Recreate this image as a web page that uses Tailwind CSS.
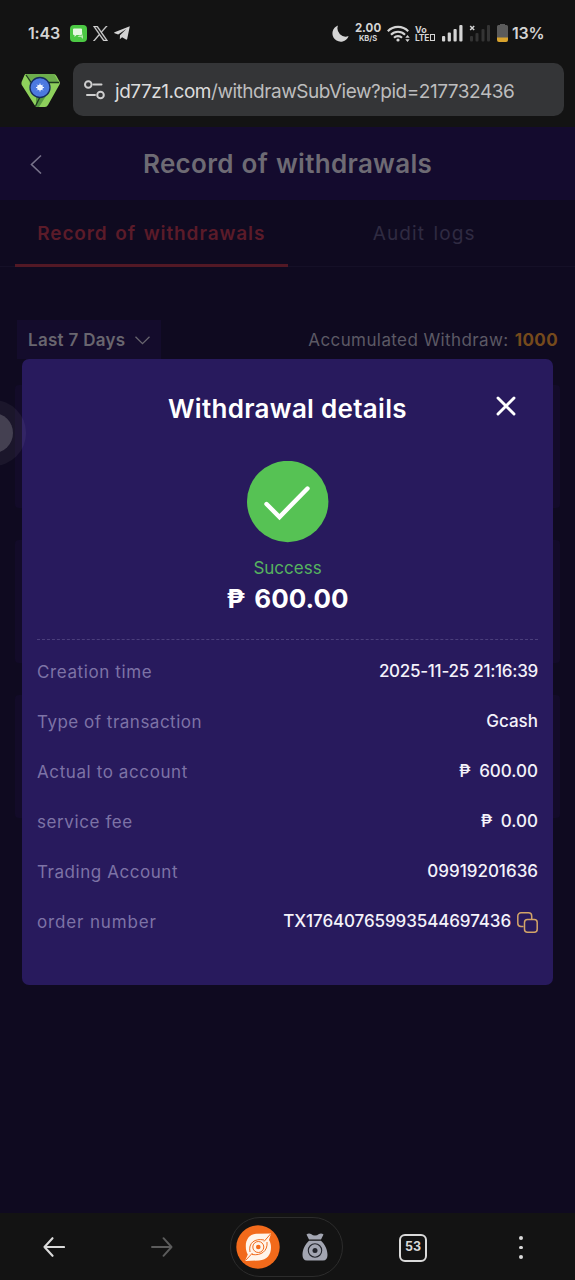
<!DOCTYPE html>
<html lang="en">
<head>
<meta charset="utf-8">
<title>Record of withdrawals</title>
<script src="https://cdn.jsdelivr.net/npm/@tailwindcss/browser@4"></script>
</head>
<body class="flex h-[1280px] w-[575px] flex-col overflow-hidden bg-[#131313] font-['Inter','Noto_Sans',sans-serif] text-white">

<!-- Status bar -->
<div class="flex h-[63px] shrink-0 items-center pt-[3px] pl-[28px] text-[#d4d4d4]">
  <span class="w-[32px] text-[16px] leading-none font-semibold tracking-[-0.2px] whitespace-nowrap">1:43</span>
  <svg class="ml-[10px] h-[17px] w-[17px]" viewBox="0 0 17 17"><rect width="17" height="17" rx="4" fill="#4cc944"/><path d="M4 3.500h7a1 1 0 0 1 1 1v4.500a1 1 0 0 1-1 1H6.500L4.500 12V10H4a1 1 0 0 1-1-1V4.500a1 1 0 0 1 1-1z" fill="#e6f8e2"/><path d="M13 6.500v7.500l-2-2H7.500l1.500-1.500h3.500z" fill="#b9eab2"/></svg>
  <svg class="ml-[6px] h-[15px] w-[15px]" viewBox="0 0 24 24" fill="#d4d4d4" stroke="#d4d4d4" stroke-width=".6"><path d="M14.234 10.162 22.977 0h-2.072l-7.591 8.824L7.251 0H.258l9.168 13.343L.258 24H2.330l8.016-9.318L16.749 24h6.993zm-2.837 3.299-.929-1.329L3.076 1.560h3.182l5.965 8.532.929 1.329 7.754 11.090h-3.182z"/></svg>
  <svg class="ml-[6px] h-[14px] w-[16px]" viewBox="0 0 16 14" fill="#d4d4d4"><path d="M15.800.300.500 6.300c-.5.300-.4.800.1 1l3.600 1.200L12.300 3 6 9.200l-.2 4 2.300-1.900 3.900 2.300c.6.300 1 .1 1.200-.6L15.800.300z"/></svg>
  <svg class="ml-[202px] h-[17px] w-[17px]" viewBox="0 0 17 17" fill="#d4d4d4"><path d="M6 .500A8.300 8.300 0 1 0 16.600 11 8.200 8.200 0 0 1 6 .500z"/></svg>
  <div class="ml-[6px] flex w-[26px] flex-col items-center gap-[2px] leading-none font-bold">
    <span class="text-[11.500px] leading-[9px]">2.00</span><span class="text-[7.500px] leading-[7px]">KB/S</span>
  </div>
  <svg class="ml-[6px] h-[17px] w-[23px]" viewBox="0 0 23 17" fill="none" stroke="#d4d4d4" stroke-width="2.100"><path d="M.800 6.200a14.200 14.200 0 0 1 20.400 0M4 9.700a9.800 9.800 0 0 1 14 0M7 12.800a5.600 5.600 0 0 1 8 0"/><circle cx="11" cy="15" r="1.600" fill="#d4d4d4" stroke="none"/><path d="M18.300 12.800 20.500 10l2.200 2.800zM18.300 14.200l2.200 2.800 2.200-2.800z" fill="#d4d4d4" stroke="none"/></svg>
  <div class="ml-[5px] flex w-[21px] flex-col leading-none font-bold">
    <span class="text-[9px] leading-[9px]">Vo</span><span class="flex items-center text-[8.500px] leading-[8px] tracking-[-0.2px]">LTE<i class="ml-px h-[7px] w-[5px] border-[1.500px] border-[#d4d4d4]"></i></span>
  </div>
  <svg class="ml-[6px] h-[18px] w-[21px]" viewBox="0 0 21 18" fill="#d4d4d4"><rect y="12" width="3.200" height="5.500" rx="1"/><rect x="5.700" y="8.500" width="3.200" height="9" rx="1"/><rect x="11.500" y="5" width="3.200" height="12.500" rx="1"/><rect x="17.300" y="1" width="3.200" height="16.500" rx="1"/></svg>
  <svg class="ml-[6px] h-[18px] w-[22px]" viewBox="0 0 22 18" fill="#343434"><path d="m1.200 2 4 4m0-4-4 4" stroke="#d4d4d4" stroke-width="1.500"/><rect x="1" y="12" width="3" height="5.500" rx="1"/><rect x="6.500" y="9" width="3" height="8.500" rx="1"/><rect x="12.500" y="5" width="3" height="12.500" rx="1"/><rect x="18" y="1" width="3" height="16.500" rx="1"/></svg>
  <svg class="ml-[6px] h-[18px] w-[11px]" viewBox="0 0 11 18"><path d="M3 0h5v1h1.500A1.500 1.500 0 0 1 11 2.500V14H0V2.500A1.500 1.500 0 0 1 1.500 1H3z" fill="#5b5b5b"/><path d="M0 13.500h11v2.500a2 2 0 0 1-2 2H2a2 2 0 0 1-2-2z" fill="#d9a32d"/></svg>
  <span class="ml-[4px] text-[16px] leading-none font-semibold tracking-[-0.2px] whitespace-nowrap">13%</span>
</div>

<!-- Address bar -->
<div class="flex h-[64px] shrink-0 items-start pr-[11px] pl-[21px]">
  <svg class="mt-[11px] h-[33px] w-[39px]" viewBox="0 0 39 33"><path d="M4.500 0h28q2 0 3 2l3 5.500q.8 1.500 0 3L27 31q-1 2-3 2h-7.500q-2 0-3-2L.800 11Q0 9 1 7L3.500 1z" fill="#8ed05c"/><path d="M5 0h28l5 9H25L9 10z" fill="#6dad4c"/><path d="M15 23 25 22 18 33h-3z" fill="#579b42"/><path d="M5 1 12 11M38 8.500H25M14.500 32l5-10" stroke="#1d3a1c" stroke-width="1.300"/><circle cx="19" cy="13.500" r="10" fill="#4c79e0" stroke="#162c60" stroke-width="1.300"/><circle cx="19" cy="13.500" r="2.800" fill="#fff"/><path d="M19 9.500v8M15 13.500h8M16.200 10.700l5.600 5.600M21.800 10.700l-5.600 5.600" stroke="#e6efff" stroke-width="1"/></svg>
  <div class="ml-[13px] flex h-[53px] grow items-center rounded-[10px] bg-[#343537] pl-[11px]">
    <svg class="h-[20px] w-[21px]" viewBox="0 0 21 20" fill="none" stroke="#cfcfcf" stroke-width="2" stroke-linecap="round"><circle cx="4.300" cy="4.500" r="3.300"/><path d="M9.500 4.500h8M3 15h8"/><circle cx="16.500" cy="15" r="3.300"/></svg>
    <span class="mt-[4px] ml-[10px] text-[19px] leading-none tracking-[-0.47px] whitespace-nowrap text-[#bdbdbe]"><span class="text-[#dcdcdc]">jd77z1.com</span>/withdrawSubView?pid=217732436</span>
  </div>
</div>

<!-- Page -->
<main class="relative flex h-[1086px] shrink-0 flex-col bg-[#0f0a20]">
  <header class="flex h-[73px] shrink-0 items-center bg-[#140b2e] pl-[30px]">
    <svg class="h-[20px] w-[12px]" viewBox="0 0 12 20" fill="none" stroke="#77728a" stroke-width="1.600"><path d="M11 1.500 1.500 10.500 11 19.500"/></svg>
    <h1 class="ml-[101px] text-[26px] leading-none font-semibold tracking-[0.3px] whitespace-nowrap text-[#6e6b74] [word-spacing:1px]">Record of withdrawals</h1>
  </header>
  <nav class="grid h-[67px] shrink-0 grid-cols-2 border-b border-[#151027] px-[15px]">
    <div class="-mb-px flex items-center justify-center border-b-3 border-[#521825] pt-[4px] text-[19px] font-semibold tracking-[0.9px] text-[#5b1b29] [word-spacing:2px]"><span class="whitespace-nowrap">Record of withdrawals</span></div>
    <div class="flex items-center justify-center pt-[2px] pl-px text-[19px] tracking-[1.100px] text-[#2f2b42] [word-spacing:2px]"><span class="whitespace-nowrap">Audit logs</span></div>
  </nav>
  <div class="mt-[53px] flex h-[39px] shrink-0 items-center justify-between pr-[17px] pl-[17px]">
    <div class="flex h-[39px] w-[144px] items-center bg-[#140c2c] pt-[2px] pl-[11px] text-[#69666f]"><span class="text-[17px] font-semibold tracking-[0.300px] whitespace-nowrap">Last 7 Days</span>
      <svg class="ml-[10px] h-[9px] w-[15px]" viewBox="0 0 15 9" fill="none" stroke="#69666f" stroke-width="1.300"><path d="m.500.700 7 7 7-7"/></svg></div>
    <div class="flex items-center gap-[6px] pt-[2px] text-[17px] tracking-[0.400px]"><span class="whitespace-nowrap text-[#5c5965]">Accumulated Withdraw:</span><span class="font-bold text-[#764a1c]">1000</span></div>
  </div>
  <section class="mt-[26px] flex flex-col gap-[32px] px-[15px]">
    <div class="h-[123px] rounded bg-[#130b29]"></div>
    <div class="h-[123px] rounded bg-[#130b29]"></div>
    <div class="h-[123px] rounded bg-[#130b29]"></div>
  </section>

  <!-- Withdrawal details dialog -->
  <div class="absolute top-[232px] left-[22px] flex h-[626px] w-[531px] flex-col rounded-[7px] bg-[#281a5d] px-[15px]">
    <div class="flex h-[98px] shrink-0 items-center pl-[131px]">
      <h2 class="mt-px w-[240px] text-[26px] leading-none font-semibold tracking-[0.300px] whitespace-nowrap">Withdrawal details</h2>
      <svg class="-mt-[4px] ml-[87px] h-[22px] w-[22px]" viewBox="0 0 22 22" fill="none" stroke="#fff" stroke-width="2.900" stroke-linecap="round"><path d="m3 3 16 16M19 3 3 19"/></svg>
    </div>
    <div class="mt-[4px] flex flex-col items-center">
      <svg class="h-[82px] w-[82px]" viewBox="0 0 82 82"><circle cx="40.700" cy="40.500" r="40.700" fill="#56c254"/><path d="M19.500 43 32.500 56 60.500 27.500" fill="none" stroke="#fff" stroke-width="4.400" stroke-linecap="round"/></svg>
      <span class="mt-[13px] text-[17px] leading-[24px] text-[#56b35f]">Success</span>
      <span class="text-[26px] leading-[37px] font-bold whitespace-nowrap [word-spacing:3px]">₱ 600.00</span>
    </div>
    <div class="mt-[22px] border-t border-dashed border-[#4b3f7c]"></div>
    <dl class="mt-[7px] flex flex-col text-[17px] [&_dd]:font-medium [&_dd]:text-[#f4f2fa] [&_dt]:pt-px [&_dt]:text-[#7d73a6] [&>div]:flex [&>div]:h-[50px] [&>div]:items-center [&>div]:justify-between">
      <div><dt class="tracking-[0.600px]">Creation time</dt><dd class="tracking-[-0.270px]">2025-11-25 21:16:39</dd></div>
      <div><dt class="tracking-[0.500px]">Type of transaction</dt><dd>Gcash</dd></div>
      <div><dt class="tracking-[0.600px]">Actual to account</dt><dd class="[word-spacing:4px]">₱ 600.00</dd></div>
      <div><dt class="tracking-[0.600px]">service fee</dt><dd class="[word-spacing:4px]">₱ 0.00</dd></div>
      <div><dt class="tracking-[0.550px]">Trading Account</dt><dd>09919201636</dd></div>
      <div><dt class="tracking-[0.850px]">order number</dt><dd class="flex items-center gap-[6px]"><span class="tracking-[-0.100px]">TX17640765993544697436</span>
        <svg class="h-[21px] w-[21px]" viewBox="0 0 21 21" fill="none" stroke="#d3a468" stroke-width="1.500"><path d="M6.500 14.500H4A3.200 3.200 0 0 1 .800 11.300V4A3.200 3.200 0 0 1 4 .800h7.500A3.200 3.200 0 0 1 14.700 4v3"/><rect x="7.500" y="7.500" width="12.700" height="12.700" rx="3"/></svg></dd></div>
    </dl>
  </div>

  <!-- Floating assistive handle -->
  <div class="absolute top-[273px] left-0 h-[66px] w-[26px] overflow-hidden">
    <div class="absolute top-0 -left-[40px] flex h-[66px] w-[66px] items-center justify-center rounded-full bg-white/5"><div class="h-[40px] w-[40px] rounded-full bg-white/18"></div></div>
  </div>
</main>

<!-- Browser toolbar -->
<footer class="flex h-[67px] shrink-0 items-center pl-[43px]">
  <svg class="h-[20px] w-[22px]" viewBox="0 0 22 20" fill="none" stroke="#dadada" stroke-width="2.100" stroke-linecap="round" stroke-linejoin="round"><path d="M21 10H1.500M9.500 1.200 1.500 10l8 8.800"/></svg>
  <svg class="ml-[86px] h-[20px] w-[22px]" viewBox="0 0 22 20" fill="none" stroke="#5c5c5c" stroke-width="1.900" stroke-linecap="round" stroke-linejoin="round"><path d="M1 10h19.500M12.500 1.200l8 8.800-8 8.800"/></svg>
  <div class="ml-[57px] flex h-[60px] w-[113px] items-center rounded-full border border-[#2c2c2c] pl-[5px]">
    <svg class="h-[44px] w-[44px]" viewBox="0 0 44 44"><circle cx="22" cy="22" r="21.700" fill="#f26a1b"/><path d="M35 8.500 20 8.800C13 9.500 9.800 15 9.800 21c0 4 .7 6 2 8.500L9 36l14-.5c8-.5 12-6 12-13 0-3-.7-5.500-2-7.500z" fill="#fff4ea"/><path d="M34.500 9 28 16.500M9.500 35.500l7-7.500M14 27C12 18 19 13 28 15M31 17c1 9-6 14-15 12.500" fill="none" stroke="#f26a1b" stroke-width="1"/><circle cx="22.300" cy="22" r="5.500" fill="none" stroke="#f26a1b" stroke-width="1"/><circle cx="22.300" cy="22" r="2.300" fill="#f26a1b"/></svg>
    <svg class="ml-[22px] h-[28px] w-[26px]" viewBox="0 0 26 28"><path d="M4.500 1.500q2-1.500 4.500-.5 2 1.500 4 1.500t4-1.500q2.500-1 4.500.5L19 6.500H7zM7 7.800h12c4 3.500 6.500 9 6.500 14.200 0 3.500-1.500 5.500-4.500 5.500H5c-3 0-4.500-2-4.500-5.500C.500 16.800 3 11.300 7 7.800z" fill="#a3a6b2"/><circle cx="13" cy="17.500" r="6.700" fill="none" stroke="#23252c" stroke-width="1.100"/><circle cx="13" cy="17.500" r="2.500" fill="#23252c"/></svg>
  </div>
  <div class="mt-[2px] ml-[56px] flex h-[28px] w-[28px] items-center justify-center rounded-[6px] border-2 border-[#dadada] text-[12.500px] font-bold text-[#dadada]">53</div>
  <div class="mt-[2px] ml-[92px] flex flex-col gap-[6px]"><i class="h-[3.500px] w-[3.500px] rounded-full bg-[#dadada]"></i><i class="h-[3.500px] w-[3.500px] rounded-full bg-[#dadada]"></i><i class="h-[3.500px] w-[3.500px] rounded-full bg-[#dadada]"></i></div>
</footer>
</body>
</html>
